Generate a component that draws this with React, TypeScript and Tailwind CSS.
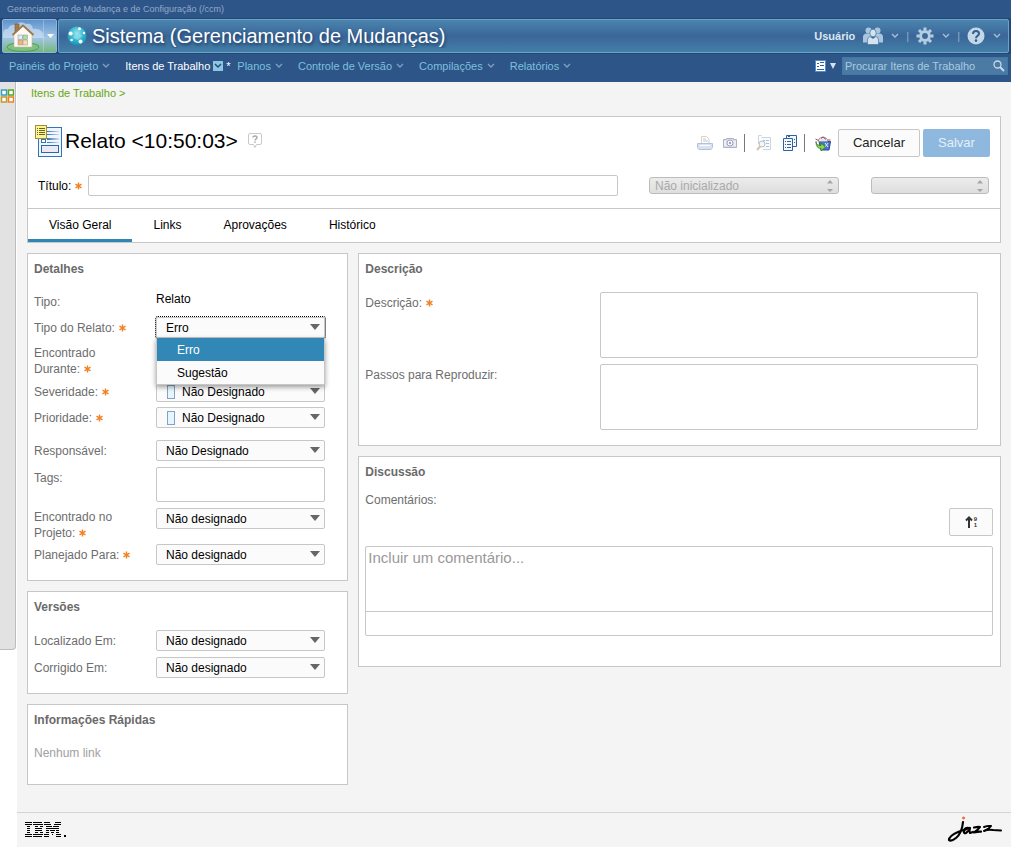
import { useState } from 'react';
import type { ReactNode } from 'react';
import clsx from 'clsx';

const NAV_ITEMS = [
    { label: 'Painéis do Projeto' },
    { label: 'Itens de Trabalho', active: true },
    { label: 'Planos' },
    { label: 'Controle de Versão' },
    { label: 'Compilações' },
    { label: 'Relatórios' },
];

const TABS = ['Visão Geral', 'Links', 'Aprovações', 'Histórico'];

function Chevron({ className }: { className?: string }) {
    return (
        <svg width="8" height="6" viewBox="0 0 8 6" fill="none" stroke="currentColor" strokeWidth="1.4" className={className}>
            <path d="M1 1l3 3 3-3" />
        </svg>
    );
}

function HomeIcon() {
    return (
        <svg width="40" height="32" viewBox="0 0 40 32">
            <path d="M0 14q0-5 5-5 2-5 8-4 4-5 10-1 6-1 7 5 6-1 10 4v5H0z" fill="#c9def2" opacity=".7" />
            <ellipse cx="20" cy="27" rx="16" ry="4.500" fill="#7fc183" stroke="#4f9d57" />
            <rect x="12" y="4" width="4" height="9" fill="#a9784a" stroke="#7d5a36" strokeWidth=".6" />
            <path d="M11 14l9-8 9 8v13H11z" fill="#fbfaf4" stroke="#c2b899" strokeWidth=".6" />
            <path d="M9.500 15L20 5.500 30.500 15" fill="none" stroke="#a27846" strokeWidth="1.800" />
            <rect x="15" y="15" width="4.500" height="4.500" fill="#dcebf7" stroke="#8f8f8f" strokeWidth=".5" />
            <rect x="20" y="15" width="4.500" height="4.500" fill="#a9e29c" stroke="#8f8f8f" strokeWidth=".5" />
            <rect x="15" y="20" width="4.500" height="5" fill="#f2b37c" stroke="#8f8f8f" strokeWidth=".5" />
            <rect x="20" y="20" width="4.500" height="5" fill="#f8dca9" stroke="#8f8f8f" strokeWidth=".5" />
        </svg>
    );
}

function ProjectIcon() {
    return (
        <svg width="20" height="20" viewBox="0 0 20 20">
            <defs>
                <radialGradient id="orb" cx=".5" cy=".35" r=".65">
                    <stop offset="0" stopColor="#9be6f2" />
                    <stop offset=".6" stopColor="#2fb3cc" />
                    <stop offset="1" stopColor="#1a8fb4" />
                </radialGradient>
            </defs>
            <circle cx="10" cy="10" r="9.500" fill="url(#orb)" />
            <path d="M10 6l5 4-4 4-5-2z" fill="#8fe0ec" opacity=".7" />
            <g fill="#fff">
                <circle cx="12.500" cy="2.800" r="1.500" />
                <circle cx="3.600" cy="7.600" r="2" />
                <circle cx="4.600" cy="14" r="1.300" />
                <circle cx="13.500" cy="15.500" r="2" />
                <circle cx="17" cy="7" r="1.200" />
            </g>
        </svg>
    );
}

function PeopleIcon() {
    return (
        <svg width="20" height="18" viewBox="0 0 20 18" fill="#a9c6de">
            <circle cx="5.500" cy="3.500" r="3" />
            <circle cx="14.500" cy="3.500" r="3" />
            <path d="M0 15.500V10q0-3 3-3.500h5v9zM20 15.500V10q0-3-3-3.500h-5v9z" />
            <g fill="#d5e3ef" stroke="#4373a0" strokeWidth=".7">
                <path d="M4.500 17.500v-4.500q0-3 2.500-3.500l3 2 3-2q2.500.5 2.500 3.500v4.500z" />
                <ellipse cx="10" cy="6" rx="3.200" ry="3.800" />
            </g>
        </svg>
    );
}

function GearIcon() {
    return (
        <svg width="18" height="18" viewBox="0 0 18 18" fill="none" stroke="#b4cde1">
            <circle cx="9" cy="9" r="4.400" strokeWidth="3" />
            <path d="M9 .5v3M9 14.500v3M.5 9h3M14.500 9h3M3 3l2.200 2.200M12.800 12.800L15 15M15 3l-2.200 2.200M5.200 12.800L3 15" strokeWidth="3" />
        </svg>
    );
}

function HelpIcon() {
    return (
        <svg width="18" height="18" viewBox="0 0 18 18">
            <circle cx="9" cy="9" r="8.500" fill="#c3d7e7" />
            <path d="M6 7q0-3 3-3t3 2.500q0 1.500-1.500 2.400T9 11.200" fill="none" stroke="#315f91" strokeWidth="2" />
            <circle cx="9" cy="13.600" r="1.300" fill="#315f91" />
        </svg>
    );
}

function WorkItemIcon() {
    return (
        <svg width="28" height="33" viewBox="0 0 28 33">
            <defs>
                <linearGradient id="lines" x1="0" x2="1">
                    <stop offset="0" stopColor="#2f6fb5" />
                    <stop offset="1" stopColor="#cfe2f5" />
                </linearGradient>
            </defs>
            <rect x="3.500" y="2.500" width="23" height="29" fill="#eef5fc" stroke="#3672b8" />
            <rect x="12" y="6" width="12" height="1" fill="url(#lines)" />
            <rect x="12" y="9" width="12" height="1" fill="url(#lines)" />
            <rect x="12" y="13" width="12" height="2" fill="url(#lines)" />
            <rect x="12" y="17" width="12" height="1" fill="url(#lines)" />
            <rect x="6.500" y="14.500" width="4" height="3" fill="#fff" stroke="#3672b8" />
            <rect x="6.500" y="20.500" width="17" height="7" fill="#eceaf0" stroke="#2968ae" />
            <rect x=".5" y=".5" width="11" height="13" fill="#fdf592" stroke="#a38f2e" />
            <path d="M2 3.500h1M4 3.500h6M2 5.500h1M4 5.500h6M2 7.500h1M4 7.500h6M2 9.500h1M4 9.500h6" stroke="#6b632f" />
        </svg>
    );
}

function PrintIcon() {
    return (
        <svg width="16" height="16" viewBox="0 0 16 16" opacity=".45">
            <path d="M4.500 8V1.500h5L12 4v4" fill="#fff" stroke="#b89a5e" />
            <path d="M6 4h3M6 6h5" stroke="#6587b5" />
            <path d="M.5 8.500h15v4l-1.500 2h-12l-1.500-2z" fill="#a9bfe4" stroke="#5577b5" />
            <path d="M3 10.500h10" stroke="#fff" />
        </svg>
    );
}

function CameraIcon() {
    return (
        <svg width="16" height="16" viewBox="0 0 16 16" opacity=".6">
            <path d="M1.500 4.500h3v-1h7v1h3v8h-13z" fill="#c9cddf" stroke="#7b7fa3" />
            <circle cx="8" cy="8" r="3" fill="#fff" stroke="#62668f" />
            <circle cx="8" cy="8" r="1.200" fill="#62668f" />
            <path d="M3 6v5M13 6v5" stroke="#fff" />
        </svg>
    );
}

function PreviewIcon() {
    return (
        <svg width="16" height="16" viewBox="0 0 16 16" opacity=".5">
            <path d="M2.500 9V.500h3M5.500 2.500h9v12H7" fill="#f5f8fc" stroke="#9bacc4" />
            <path d="M7 5.500h2M10 5.500h3M10 8.500h3M10 11.500h3" stroke="#5e81b3" />
            <circle cx="6" cy="9" r="3" fill="#e4eef8" stroke="#6d7f99" />
            <path d="M4 11.500L1 15" stroke="#b08a50" strokeWidth="2" />
        </svg>
    );
}

function CopyIcon() {
    return (
        <svg width="16" height="16" viewBox="0 0 16 16" fill="#f3f8fd" stroke="#2a63a3">
            <path d="M4.500.5h10v11h-10z" />
            <path d="M1.500 3.500h9v12h-9z" />
            <path d="M3 6.500h1M5 6.500h4M3 9.500h1M5 9.500h4M3 12.500h1M5 12.500h4M12 4.500h1M12 7.500h1M6 1.500h2" stroke="#3d5f8c" />
        </svg>
    );
}

function MoveIcon() {
    return (
        <svg width="16" height="16" viewBox="0 0 16 16">
            <path d="M4 6.500h11.500L14 15H6z" fill="#4b76c8" stroke="#234a9a" />
            <path d="M3.500 4.500q4.500-5 9 0v2h-9z" fill="#dfe8f5" stroke="#8b97ad" />
            <path d="M6 3.500l2-1.500 3 2.500M13 5h2.500" fill="none" stroke="#cc4040" />
            <path d="M.5 4l3 1.500" stroke="#cc4040" />
            <path d="M10 8l3 4M13 8l-3 4" stroke="#e6efff" />
            <path d="M1 6.500q0 4 5 4V8l4.500 4L6 16v-2.500q-5 0-5-7z" fill="#8fd54b" stroke="#2c7a1f" strokeWidth=".8" />
        </svg>
    );
}

function SearchIcon() {
    return (
        <svg width="12" height="12" viewBox="0 0 12 12" fill="none" stroke="#c5dbea">
            <circle cx="4.500" cy="4.500" r="3.500" strokeWidth="1.300" />
            <path d="M7 7l4 4" strokeWidth="2" />
        </svg>
    );
}

function IbmLogo() {
    const stripes = [
        'M0 .5h7M8 .5h9M19 .5h6M30 .5h6',
        'M0 2.500h7M8 2.500h10M19 2.500h7M29 2.500h7',
        'M2 4.500h3M10 4.500h3M15 4.500h3M21 4.500h6M28 4.500h6',
        'M2 6.500h3M10 6.500h7M21 6.500h13',
        'M2 8.500h3M10 8.500h7M21 8.500h3M25 8.500h5M31 8.500h3',
        'M2 10.500h3M10 10.500h3M15 10.500h3M21 10.500h3M26 10.500h3M31 10.500h3',
        'M0 12.500h7M8 12.500h10M19 12.500h5M27 12.500h1M31 12.500h5',
        'M0 14.500h7M8 14.500h9M19 14.500h5M31 14.500h5M39 14.500h2M39 13.500h2',
    ];
    return (
        <svg width="42" height="16" viewBox="0 0 42 16" stroke="#000" strokeWidth="1.100" role="img" aria-label="IBM">
            {stripes.map((d) => (
                <path key={d} d={d} />
            ))}
        </svg>
    );
}

function JazzLogo() {
    return (
        <svg width="56" height="28" viewBox="0 0 56 28" fill="none" stroke="#000" strokeWidth="2.200" strokeLinecap="round" strokeLinejoin="round" role="img" aria-label="jazz">
            <path d="M16 6q-1 11-7 16-5 4-7 2 0-4 9-8 5-2 9-3" />
            <path d="M22 12q-4-1-5 3-.5 3 2 2 3-2 4-5-1 3 0 5l3-1" />
            <path d="M27 11.500q4-1 6-.5-2 3-6 5.500 4-1 7-.8" />
            <path d="M37 11q4-1.500 7-1-2 3-7 5 4-2 9-1l8 .5" strokeWidth="2" />
            <circle cx="16.500" cy="2" r="1" fill="#f07030" stroke="#f07030" strokeWidth="1" />
        </svg>
    );
}

function Required() {
    return (
        <svg width="7" height="8" viewBox="0 0 7 8" stroke="#f08122" strokeWidth="1.400" role="img" aria-label="obrigatório" className="ml-1 inline-block align-baseline">
            <path d="M3.500.5v7M.5 2.200l6 3.600M6.500 2.200l-6 3.600" />
        </svg>
    );
}

interface PanelProps {
    title: string;
    className?: string;
    children: ReactNode;
}

function Panel({ title, className, children }: PanelProps) {
    return (
        <section className={clsx('border border-[#c7c7c7] bg-white px-[6px] pt-[7px]', className)}>
            <h2 className="font-bold text-[#6a6a6a]">{title}</h2>
            {children}
        </section>
    );
}

interface FieldProps {
    id: string;
    label: string;
    required?: boolean;
    twoLines?: boolean;
    className?: string;
    children: ReactNode;
}

function Field({ id, label, required, twoLines, className, children }: FieldProps) {
    return (
        <div className={clsx('flex items-start pr-4', className)}>
            <label htmlFor={id} className={clsx('w-[122px] shrink-0 text-[#6d6d6d]', twoLines ? 'pt-px pr-7' : 'pt-[3px]')}>
                {label}
                {required && <Required />}
            </label>
            <div className="relative min-w-0 flex-1">{children}</div>
        </div>
    );
}

interface DropdownProps {
    id: string;
    options: string[];
    marker?: boolean;
    open?: boolean;
}

function Dropdown({ id, options, marker, open }: DropdownProps) {
    const [value, setValue] = useState(options[0]);
    const [expanded, setExpanded] = useState(!!open);

    return (
        <>
            <select
                id={id}
                value={value}
                onChange={(e) => setValue(e.target.value)}
                className={clsx(
                    'block h-[21px] w-full appearance-none rounded-xs border border-[#c7c7c7] bg-[#fbfbfb] pr-5 text-black',
                    marker ? 'pl-[25px]' : 'pl-[9px]',
                    open && 'outline-1 outline-dotted outline-black',
                )}
            >
                {options.map((option) => (
                    <option key={option}>{option}</option>
                ))}
            </select>
            {marker && <span className="pointer-events-none absolute top-[4px] left-[11px] h-[14px] w-2 border border-[#8aa0bd] bg-[#e6f6ff]" />}
            <svg width="10" height="6" viewBox="0 0 10 6" fill="#666" className="pointer-events-none absolute top-[7px] right-[5px]">
                <path d="M0 0h10L5 6z" />
            </svg>
            {expanded && (
                <ul role="listbox" className="absolute top-[21px] left-0 z-10 w-full border border-t-0 border-[#c7c7c7] bg-[#fbfbfb] shadow-[0_2px_5px_rgba(0,0,0,0.4)]">
                    {options.map((option) => (
                        <li
                            key={option}
                            role="option"
                            aria-selected={option === value}
                            onClick={() => {
                                setValue(option);
                                setExpanded(false);
                            }}
                            className={clsx('h-[23px] px-5 leading-6', option === value ? 'bg-[#3187b5] text-white' : 'text-black')}
                        >
                            {option}
                        </li>
                    ))}
                </ul>
            )}
        </>
    );
}

function StatusSelect({ label, option, className }: { label: string; option: string; className: string }) {
    return (
        <div className={clsx('relative shrink-0', className)}>
            <select
                disabled
                aria-label={label}
                className="block h-[17px] w-full appearance-none rounded-[3px] border border-[#bcbcbc] bg-linear-to-b from-[#ececec] to-[#dedede] pl-[5px] text-[#a9a9a9]"
            >
                <option>{option}</option>
            </select>
            <svg width="6" height="12" viewBox="0 0 6 12" fill="#a5a5a5" className="pointer-events-none absolute top-[3px] right-[6px]">
                <path d="M0 3.500L3 0l3 3.500zM0 9l3 3 3-3z" />
            </svg>
        </div>
    );
}

function Header() {
    return (
        <header className="bg-[#2d5588] text-[11px]">
            <p className="h-[18px] pl-[7px] text-[9px] leading-[18px] text-[#93abc9]">Gerenciamento de Mudança e de Configuração (/ccm)</p>

            <div className="flex h-9 gap-px bg-[#234777] px-[2px] py-px">
                <button aria-label="Página inicial" className="flex w-[55px] shrink-0 items-center rounded-xs border border-[#8db6d9] bg-linear-to-b from-[#5f93cb] via-[#a3c5e6] via-55% to-[#74b77c]">
                    <HomeIcon />
                    <span className="flex h-full flex-1 items-center justify-center border-l border-white/25">
                        <svg width="7" height="4" viewBox="0 0 7 4" fill="#fff">
                            <path d="M0 0h7L3.500 4z" />
                        </svg>
                    </span>
                </button>
                <div className="flex min-w-0 flex-1 items-center rounded-xs border border-[#69a3c8] bg-linear-to-b from-[#4b85ae] via-[#3a6698] via-50% to-[#427fa8] pr-[7px] pl-2">
                    <ProjectIcon />
                    <h1 className="ml-[5px] flex-1 truncate text-[20px] leading-6 text-white [text-shadow:1px_2px_3px_#1f3d66]">Sistema (Gerenciamento de Mudanças)</h1>
                    <span className="mr-2 font-bold text-[#dbe7f1]">Usuário</span>
                    <button aria-label="Usuário" className="flex items-center gap-2 text-[#a3c0d8]">
                        <PeopleIcon />
                        <Chevron />
                    </button>
                    <span className="mx-[7px] text-[#8fb1cc]">|</span>
                    <button aria-label="Administração" className="flex items-center gap-2 text-[#a3c0d8]">
                        <GearIcon />
                        <Chevron />
                    </button>
                    <span className="mx-[7px] text-[#8fb1cc]">|</span>
                    <button aria-label="Ajuda" className="flex items-center gap-2 text-[#a3c0d8]">
                        <HelpIcon />
                        <Chevron />
                    </button>
                </div>
            </div>

            <nav className="flex h-7 items-start pr-[3px] pl-[9px]">
                {NAV_ITEMS.map((item) => (
                    <a key={item.label} href="#" className={clsx('flex h-[23px] items-center whitespace-nowrap', item.active ? 'mr-[6px] gap-[3px] text-white' : 'mr-[15px] gap-1 text-[#7cc0df]')}>
                        {item.label}
                        {item.active ? (
                            <>
                                <span className="flex size-[10px] items-center justify-center bg-[#8cc6e0] text-[#234777]">
                                    <Chevron />
                                </span>
                                <span className="w-[5px]">*</span>
                            </>
                        ) : (
                            <Chevron className="text-[#7f9fc2]" />
                        )}
                    </a>
                ))}
                <div className="mt-[3px] ml-auto flex h-[18px] items-center">
                    <button aria-label="Tipo de pesquisa" className="mr-[6px] flex items-center gap-1">
                        <svg width="11" height="12" viewBox="0 0 11 12">
                            <rect width="11" height="12" fill="#fff" stroke="#4a90d9" strokeWidth="2" />
                            <path d="M2 3.500h2M5 2.500h4M2 6.500h2M5 5.500h4M2 9.500h7" stroke="#3a5f94" />
                        </svg>
                        <svg width="6" height="6" viewBox="0 0 6 6" fill="#d5e2ee">
                            <path d="M0 0h6L3 6z" />
                        </svg>
                    </button>
                    <div className="flex h-[18px] w-[166px] items-center border border-[#4079a6] bg-[#4b7ba5] px-[2px]">
                        <input aria-label="Procurar" placeholder="Procurar Itens de Trabalho" className="min-w-0 flex-1 text-white outline-none placeholder:text-[#a9cae2]" />
                        <button aria-label="Pesquisar">
                            <SearchIcon />
                        </button>
                    </div>
                </div>
            </nav>
        </header>
    );
}

function TitleCard() {
    const [activeTab, setActiveTab] = useState(TABS[0]);

    return (
        <section className="border border-[#c7c7c7] bg-white">
            <div className="flex items-center pt-2 pr-[10px] pl-[7px]">
                <WorkItemIcon />
                <h2 className="ml-[2px] pb-px text-[21px] leading-8 text-black">Relato &lt;10:50:03&gt;</h2>
                <button aria-label="Ajuda do item" className="ml-[10px]">
                    <svg width="14" height="18" viewBox="0 0 14 18" fill="none" stroke="#c9c9c9">
                        <path d="M2 .5h10q1.500 0 1.500 1.500v8q0 1.500-1.500 1.500H8.500L7 14.500l-1.500-3H2Q.5 11.500.5 10V2Q.5.5 2 .5z" />
                        <path d="M5 4.500q0-1.500 2-1.500t2 1.500q0 1-1 1.500T7 7.500M7 8.500v1.500" stroke="#aaa" strokeWidth="1.400" />
                    </svg>
                </button>
                <div className="ml-auto flex items-center pt-[2px]">
                    <button aria-label="Imprimir" className="mr-[9px]"><PrintIcon /></button>
                    <button aria-label="Capturar tela" className="mr-[6px]"><CameraIcon /></button>
                    <span className="h-[18px] w-px bg-[#777]" />
                    <button aria-label="Visualizar" className="mr-[10px] ml-[11px]"><PreviewIcon /></button>
                    <button aria-label="Copiar" className="mr-[6px]"><CopyIcon /></button>
                    <span className="h-[18px] w-px bg-[#777]" />
                    <button aria-label="Mover" className="mr-[7px] ml-[10px]"><MoveIcon /></button>
                    <button className="h-7 w-[82px] rounded-xs border border-[#c7c7c7] bg-[#fbfbfb] text-[13px] text-[#222]">Cancelar</button>
                    <button className="ml-[3px] h-7 w-[67px] rounded-xs bg-[#8eb8de] text-[13px] text-[#e4effa]">Salvar</button>
                </div>
            </div>

            <div className="mt-[17px] mb-3 flex items-center pr-[11px] pl-[10px]">
                <label htmlFor="titulo" className="w-[50px] shrink-0 text-black">
                    Título:
                    <Required />
                </label>
                <input id="titulo" className="h-[21px] min-w-0 flex-1 rounded-xs border border-[#c7c7c7] px-1" />
                <StatusSelect label="Estado" option="Não inicializado" className="ml-[31px] w-[190px]" />
                <StatusSelect label="Resolução" option="" className="ml-8 w-[118px]" />
            </div>

            <div role="tablist" className="flex border-t border-[#c7c7c7]">
                {TABS.map((tab) => (
                    <button
                        key={tab}
                        role="tab"
                        aria-selected={tab === activeTab}
                        onClick={() => setActiveTab(tab)}
                        className={clsx('h-[33px] border-b-3 px-[21px] pt-[2px] text-black', tab === activeTab ? 'border-[#2f86b4]' : 'border-transparent')}
                    >
                        {tab}
                    </button>
                ))}
            </div>
        </section>
    );
}

export default function App() {
    return (
        <div className="flex min-h-screen flex-col bg-white font-['Liberation_Sans',Arial,sans-serif] text-[12px] leading-4">
            <Header />

            <div className="flex flex-1 items-stretch">
                <aside className="w-[17px] shrink-0">
                    <div className="mr-px h-[568px] rounded-br-sm border-r border-b border-[#bdbdbd] bg-[#e2e2e2] pt-[7px]">
                        <button aria-label="Painel lateral" className="block">
                            <svg width="14" height="14" viewBox="0 0 14 14" fill="#fff" strokeWidth="1.500">
                                <rect x="1.500" y="1" width="5" height="5" stroke="#35a0c0" />
                                <rect x="8.500" y="1" width="5" height="5" stroke="#5aa527" />
                                <rect x="1.500" y="8" width="5" height="5" stroke="#c09a2c" />
                                <rect x="8.500" y="8" width="5" height="5" stroke="#f08122" />
                            </svg>
                        </button>
                    </div>
                </aside>

                <div className="flex min-w-0 flex-1 flex-col bg-[#f4f4f4]">
                    <main className="flex-1 px-[10px] pb-[27px]">
                        <a href="#" className="block pt-[3px] pb-[15px] pl-1 text-[11px] text-[#66a80f]">
                            Itens de Trabalho &gt;
                        </a>

                        <TitleCard />

                        <div className="mt-[10px] grid grid-cols-[1fr_2fr] items-start gap-[10px]">
                            <div className="flex flex-col gap-[10px]">
                                <Panel title="Detalhes" className="pb-[15px]">
                                    <Field id="tipo" label="Tipo:" className="mt-[14px]">
                                        <output id="tipo" className="block text-black">Relato</output>
                                    </Field>
                                    <Field id="tipo-relato" label="Tipo do Relato:" required className="mt-[7px]">
                                        <Dropdown id="tipo-relato" options={['Erro', 'Sugestão']} open />
                                    </Field>
                                    <Field id="durante" label="Encontrado Durante:" required twoLines className="mt-[6px]">
                                        <Dropdown id="durante" options={['Não designado']} />
                                    </Field>
                                    <Field id="severidade" label="Severidade:" required className="mt-1">
                                        <Dropdown id="severidade" options={['Não Designado']} marker />
                                    </Field>
                                    <Field id="prioridade" label="Prioridade:" required className="mt-[5px]">
                                        <Dropdown id="prioridade" options={['Não Designado']} marker />
                                    </Field>
                                    <Field id="responsavel" label="Responsável:" className="mt-3">
                                        <Dropdown id="responsavel" options={['Não Designado']} />
                                    </Field>
                                    <Field id="tags" label="Tags:" className="mt-[6px]">
                                        <textarea id="tags" className="block h-[35px] w-full resize-none rounded-xs border border-[#c7c7c7] px-1" />
                                    </Field>
                                    <Field id="projeto" label="Encontrado no Projeto:" required twoLines className="mt-[6px]">
                                        <Dropdown id="projeto" options={['Não designado']} />
                                    </Field>
                                    <Field id="planejado" label="Planejado Para:" required className="mt-[3px]">
                                        <Dropdown id="planejado" options={['Não designado']} />
                                    </Field>
                                </Panel>

                                <Panel title="Versões" className="pb-[15px]">
                                    <Field id="localizado" label="Localizado Em:" className="mt-[15px]">
                                        <Dropdown id="localizado" options={['Não designado']} />
                                    </Field>
                                    <Field id="corrigido" label="Corrigido Em:" className="mt-[6px]">
                                        <Dropdown id="corrigido" options={['Não designado']} />
                                    </Field>
                                </Panel>

                                <Panel title="Informações Rápidas" className="pb-[23px]">
                                    <p className="mt-[17px] text-[#a0a0a0]">Nenhum link</p>
                                </Panel>
                            </div>

                            <div className="flex flex-col gap-[10px]">
                                <Panel title="Descrição" className="pb-[15px]">
                                    <div className="mt-[15px] grid grid-cols-[235px_1fr] gap-y-[6px] pr-4">
                                        <label htmlFor="descricao" className="pt-[3px] text-[#6d6d6d]">
                                            Descrição:
                                            <Required />
                                        </label>
                                        <textarea id="descricao" className="block h-[66px] w-full resize-none rounded-xs border border-[#c7c7c7] px-1" />
                                        <label htmlFor="passos" className="pt-[3px] text-[#6d6d6d]">
                                            Passos para Reproduzir:
                                        </label>
                                        <textarea id="passos" className="block h-[66px] w-full resize-none rounded-xs border border-[#c7c7c7] px-1" />
                                    </div>
                                </Panel>

                                <Panel title="Discussão" className="pb-[30px]">
                                    <label htmlFor="comentario" className="mt-3 block text-[#6d6d6d]">
                                        Comentários:
                                    </label>
                                    <div className="mr-px flex justify-end">
                                        <button aria-label="Ordenar comentários" className="flex h-7 w-11 items-center justify-center gap-px rounded-xs border border-[#c7c7c7] bg-[#fbfbfb] text-[#333]">
                                            <svg width="8" height="12" viewBox="0 0 8 12" fill="none" stroke="currentColor" strokeWidth="2">
                                                <path d="M4 12V2M1 4.500l3-3 3 3" />
                                            </svg>
                                            <span className="text-[6px] leading-[6px] font-bold">
                                                9<br />1
                                            </span>
                                        </button>
                                    </div>
                                    <div className="mt-[10px] mr-px rounded-xs border border-[#c7c7c7]">
                                        <textarea
                                            id="comentario"
                                            placeholder="Incluir um comentário..."
                                            className="block h-[64px] w-full resize-none px-[2px] pt-[2px] text-[15px] leading-[18px] outline-none placeholder:text-[#999]"
                                        />
                                        <div className="h-6 border-t border-[#c7c7c7]" />
                                    </div>
                                </Panel>
                            </div>
                        </div>
                    </main>

                    <footer className="flex h-[35px] items-center justify-between border-t border-[#d4d4d4] px-2">
                        <IbmLogo />
                        <JazzLogo />
                    </footer>
                </div>
            </div>
        </div>
    );
}
